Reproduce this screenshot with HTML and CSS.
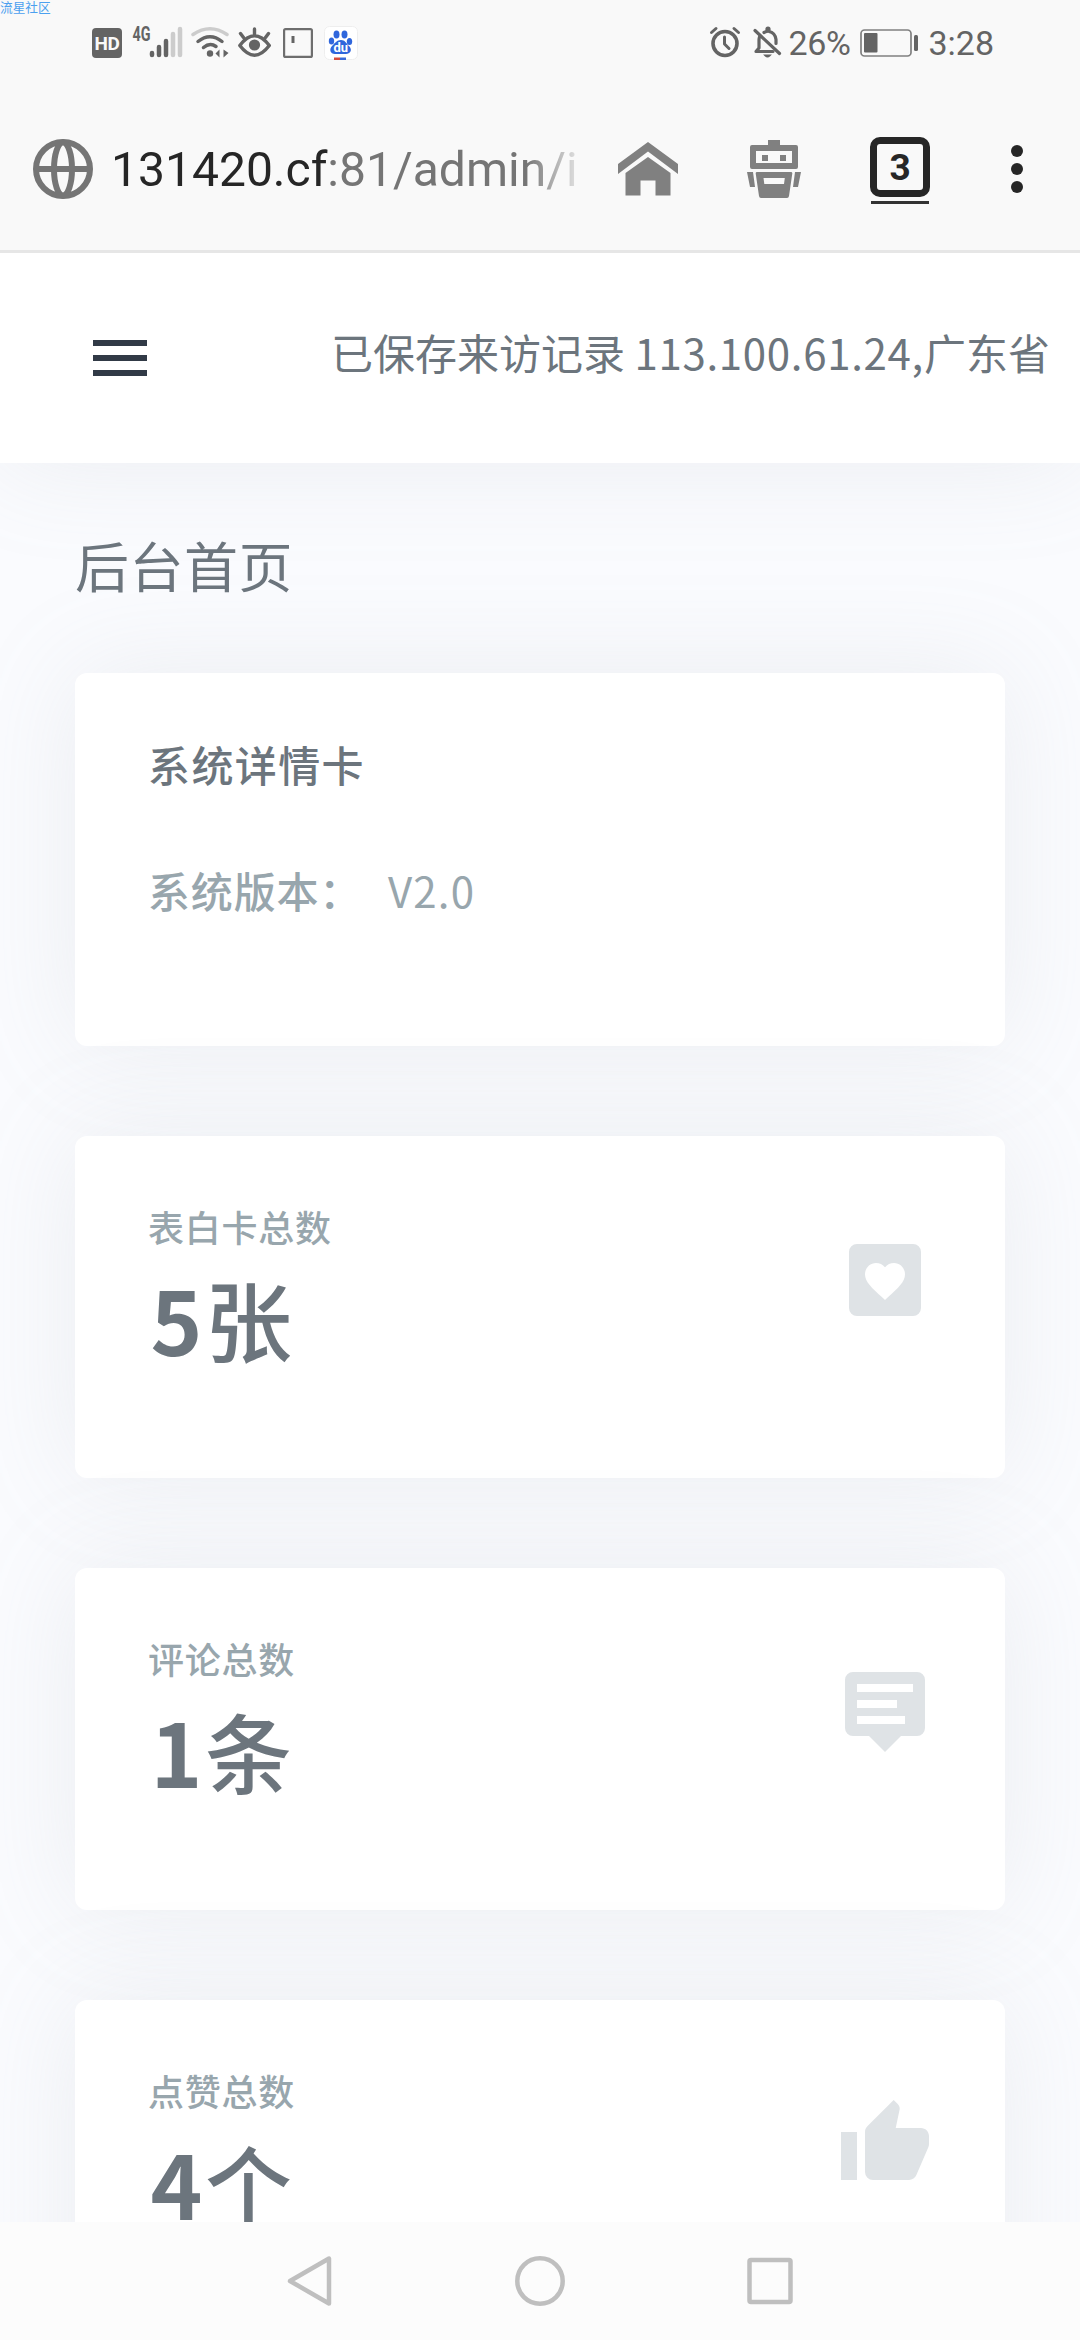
FILE: index.html
```html
<!DOCTYPE html>
<html lang="zh-CN">
<head>
<meta charset="utf-8">
<title>后台首页</title>
<link rel="stylesheet" href="styles.css">
</head>
<body>
<div class="screen">
  <header class="chrome">
    <span class="watermark">流星社区</span>
    <div class="status">
      <div class="status-group">
        <span class="hd">HD</span>
        <svg class="signal" width="52" height="38" viewBox="132 23 52 38"><text class="g4" x="132.500" y="41" textLength="18" lengthAdjust="spacingAndGlyphs">4G</text><path d="M152 53v2M159 47v8M166 41v14" stroke="#646464" stroke-width="4.500" stroke-linecap="round"/><path d="M173 34v21M180 29v26" stroke="#ccc" stroke-width="4.500" stroke-linecap="round"/></svg>
        <svg class="wifi" width="38" height="34" viewBox="191 25 38 34" fill="none" stroke-width="3.500" stroke-linecap="round"><path d="M193 34.500Q210 23 227 34.500" stroke="#ccc"/><path d="M198 41.500Q210 32 222 41.500M203.500 47.500Q210 42 216 46.500" stroke="#646464"/><circle cx="210" cy="53.500" r="3.200" fill="#646464"/><path d="M215.500 53.500l4-4v8zM228.500 53l-5-3.500v8z" fill="#646464"/></svg>
        <svg class="eye" width="34" height="34" viewBox="238 25 34 34" fill="none" stroke="#646464" stroke-width="3.400" stroke-linecap="round" stroke-linejoin="round"><path d="M239.800 45.500Q254.500 26 269.300 45.500Q254.500 65 239.800 45.500zM254.500 35v-6M243.500 37.500l-3-4M265.500 37.500l3-4"/><circle cx="254.500" cy="45" r="5.600" fill="#646464" stroke="none"/></svg>
        <svg class="note" width="30" height="30" viewBox="0 0 30 30"><rect x="1.100" y="1.100" width="27.800" height="27.800" rx="1.500" fill="none" stroke="#6e6e6e" stroke-width="2.200"/><path d="M8.500 8h3v7h-3z" fill="#646464"/></svg>
        <svg class="baidu" width="34" height="34" viewBox="0 0 34 34"><rect x=".5" y=".5" width="33" height="33" rx="5" fill="#fff" stroke="#eee"/><g fill="#2f66dc"><ellipse cx="12.500" cy="8.500" rx="3" ry="4"/><ellipse cx="20.500" cy="8.500" rx="3" ry="4"/><ellipse cx="7.500" cy="15" rx="2.700" ry="3.500"/><ellipse cx="25.500" cy="15.500" rx="2.700" ry="3.500"/><path d="M17 14c4 0 5 3 8 6 4 4 1 8-3 8H11c-5 0-6-5-3-8 3-3 5-6 9-6z"/></g><path d="M10 31.500h6v2.500h-6z" fill="#d54a3a"/><path d="M16 31.500h6v2.500h-6z" fill="#3768d8"/><text class="du" x="9.500" y="26">du</text></svg>
      </div>
      <div class="status-group">
        <svg class="alarm" width="32" height="34" viewBox="709 25 32 34" fill="none" stroke="#646464" stroke-linecap="round" stroke-linejoin="round"><circle cx="725" cy="43.500" r="12" stroke-width="3.600"/><path d="M724.500 37v7l4.500 4.500" stroke-width="3"/><path d="M711.500 32.500l4.500-4M738.500 32.500l-4.500-4" stroke-width="3"/></svg>
        <svg class="bell" width="30" height="34" viewBox="752 25 30 34" fill="none" stroke="#646464" stroke-width="3.200" stroke-linecap="round"><path d="M755 30.500l24.500 23"/><path d="M773 51.500H756l3-3.500V40q0-1.500.5-3M764 32.500q2-1 3-1V29q0-1 1-1t1 1v2.500q6 1 7 8v4" stroke-linejoin="round"/><path d="M765.500 55.500h4q-2 2-4 0z" stroke-width="2"/></svg>
        <span class="percent">26%</span>
        <svg class="battery" width="59" height="28" viewBox="0 0 59 28"><rect x="1" y="1" width="50" height="26" rx="3.500" fill="none" stroke="#808080" stroke-width="1.700"/><rect x="4" y="4" width="13.500" height="19.500" rx="1" fill="#646464"/><rect x="54" y="6" width="4" height="16" rx="1.500" fill="#646464"/></svg>
        <span class="clock">3:28</span>
      </div>
    </div>
    <div class="urlbar">
      <svg class="globe" width="60" height="60" viewBox="0 0 60 60" fill="none" stroke="#757575" stroke-width="6"><circle cx="30" cy="30" r="27"/><path d="M3 30h54"/><ellipse cx="30" cy="30" rx="9" ry="26.500"/></svg>
      <div class="url"><span class="host">131420.cf</span>:81/admin/i</div>
      <svg class="home" width="60" height="54" viewBox="0 0 60 54" fill="#808080"><path d="M30 0L60 22V32L30 9.500 0 32V22zM30 15L52.500 31V53.500H37.500V38.500H22.500V53.500H7.500V31z"/></svg>
      <svg class="robot" width="54" height="58" viewBox="0 0 54 58" fill="#808080" fill-rule="evenodd"><path d="M21 0H33V5H49q2 0 2 2V27q0 2-2 2H5q-2 0-2-2V7q0-2 2-2H21zM9 11V23H45V11zM15 15h6v6h-6zM33 15h6v6h-6zM10 32H44q1.500 0 1.300 1.500L42 56q-.3 2-2 2H14q-1.700 0-2-2L8.700 33.500Q8.500 32 10 32zM16.500 38l.8 6H37l.8-6zM0 32h6l2 15H3zM54 32h-6l-2 15h5z"/></svg>
      <div class="tabs"><span class="tabcount">3</span></div>
      <svg class="more" width="12" height="48" viewBox="0 0 12 48" fill="#262626"><circle cx="6" cy="6" r="6"/><circle cx="6" cy="24" r="6"/><circle cx="6" cy="42" r="6"/></svg>
    </div>
  </header>
  <main class="page">
    <div class="topbar">
      <span class="menu"><i></i><i></i><i></i></span>
      <p class="notice">已保存来访记录 <span class="ip">113.100.61.24,</span>广东省</p>
    </div>
    <h1 class="title">后台首页</h1>
    <section class="card detail">
      <h2 class="detail-title">系统详情卡</h2>
      <p class="version"><b>系统版本：</b><span>V2.0</span></p>
    </section>
    <section class="card stat">
      <div><h3 class="label">表白卡总数</h3><p class="value"><b>5</b>张</p></div>
      <svg class="stat-icon" viewBox="0 0 24 24"><path fill-rule="evenodd" d="M5 3H19A2 2 0 0 1 21 5V19A2 2 0 0 1 19 21H5A2 2 0 0 1 3 19V5A2 2 0 0 1 5 3zM12 17L12.720 16.340C15.300 14 17 12.460 17 10.570C17 9.030 15.790 7.750 14.250 7.750C13.380 7.750 12.550 8.150 12 8.800C11.450 8.150 10.620 7.750 9.750 7.750C8.210 7.750 7 9.030 7 10.570C7 12.460 8.700 14 11.280 16.340z"/></svg>
    </section>
    <section class="card stat">
      <div><h3 class="label">评论总数</h3><p class="value"><b>1</b>条</p></div>
      <svg class="stat-icon" viewBox="0 0 24 24"><path fill-rule="evenodd" d="M4 2H20A2 2 0 0 1 22 4V16A2 2 0 0 1 20 18H16L12 22 8 18H4A2 2 0 0 1 2 16V4A2 2 0 0 1 4 2zM5 5V7H19V5zM5 9V11H15V9zM5 13V15H17V13z"/></svg>
    </section>
    <section class="card stat">
      <div><h3 class="label">点赞总数</h3><p class="value"><b>4</b>个</p></div>
      <svg class="stat-icon" viewBox="0 0 24 24"><path d="M23 10C23 8.890 22.100 8 21 8H14.680L15.640 3.430C15.660 3.330 15.670 3.220 15.670 3.110C15.670 2.700 15.500 2.320 15.230 2.050L14.170 1 7.590 7.580C7.220 7.950 7 8.450 7 9V19A2 2 0 0 0 9 21H18C18.830 21 19.540 20.500 19.840 19.780L22.860 12.730C22.950 12.500 23 12.260 23 12V10M1 21H5V9H1V21Z"/></svg>
    </section>
  </main>
  <nav class="navbar">
    <svg width="50" height="54" viewBox="0 0 50 54"><path d="M44 4.500V49.500L5 27z"/></svg>
    <svg width="54" height="54" viewBox="0 0 54 54"><circle cx="27" cy="27" r="22.700"/></svg>
    <svg width="50" height="54" viewBox="0 0 50 54"><rect x="4.500" y="6" width="41" height="42" rx="1.500"/></svg>
  </nav>
</div>
</body>
</html>
```
FILE: styles.css
```css
* { box-sizing: border-box; margin: 0; padding: 0; }
body { font-family: "Noto Sans CJK SC", sans-serif; color: #6c757d; }
svg { display: block; flex: none; }
.screen { width: 1080px; height: 2340px; display: flex; flex-direction: column; overflow: hidden; }

.chrome { position: relative; height: 253px; flex: none; background: #f9f9f9; border-bottom: 3px solid #e6e6e6; font-family: Roboto, sans-serif; }
.watermark { position: absolute; left: 0; top: 0; font: 12.700px/13px "Noto Sans CJK SC", sans-serif; color: #4ba0ef; }
.status { height: 86px; padding: 0 86px 0 92px; display: flex; justify-content: space-between; align-items: center; color: #646464; }
.status-group { display: flex; align-items: center; }
.hd { width: 30px; height: 30px; border-radius: 4px; background: #646464; color: #f9f9f9; font: bold 19px/31px Roboto, sans-serif; text-align: center; letter-spacing: -.5px; }
.g4 { font: bold 20px Roboto, sans-serif; fill: #646464; }
.signal { margin-left: 10px; margin-bottom: 2px; }
.wifi { margin-left: 7px; margin-bottom: 2px; }
.eye { margin-left: 9px; margin-bottom: 2px; }
.note { margin-left: 11px; }
.baidu { margin-left: 11px; }
.du { font: bold 13px Roboto, sans-serif; fill: #fff; }
.bell { margin-left: 11px; margin-bottom: 2px; }
.alarm { margin-bottom: 2px; }
.percent { font-size: 34px; width: 63px; margin-left: 6px; letter-spacing: -.3px; }
.battery { margin-left: 9px; }
.clock { font-size: 34px; margin-left: 9px; }

.urlbar { height: 164px; padding: 2px 0 0 33px; display: flex; align-items: center; }
.url { width: 464px; padding-top: 2px; margin-left: 18px; overflow: hidden; white-space: nowrap; font-size: 48px; line-height: 64px; color: #757575; mask-image: linear-gradient(90deg, #000 415px, transparent 478px); }
.host { color: #262626; }
.home { margin-left: 43px; }
.robot { margin-left: 69px; }
.tabs { height: 67px; margin: 3px 0 0 70px; display: flex; border-bottom: 3px solid #333; width: 58px; justify-content: center; }
.tabcount { width: 60px; height: 60px; flex: none; border: 7px solid #262626; border-radius: 10px; color: #262626; font: bold 37px/48px Roboto, sans-serif; text-align: center; }
.more { margin-left: 82px; }

.page { flex: 1; min-height: 0; overflow: hidden; background: #fafbfe; }
.topbar { height: 210px; padding: 0 30px 0 93px; display: flex; align-items: center; justify-content: space-between; background: #fff; box-shadow: 0 0 105px rgba(154, 161, 171, .15); }
.menu { display: flex; flex-direction: column; gap: 9px; }
.menu i { width: 54px; height: 6px; background: #313a46; }
.notice { font-size: 42px; line-height: 60px; white-space: nowrap; padding-bottom: 13px; }
.ip { letter-spacing: .7px; }
.title { height: 210px; padding-left: 75px; font-size: 54px; font-weight: 400; letter-spacing: .5px; line-height: 203px; }
.card { margin: 0 75px 90px; background: #fff; border-radius: 12px; box-shadow: 0 0 105px rgba(154, 161, 171, .15); }
.detail { height: 373px; padding: 59px 73px; }
.detail-title { font-size: 42px; font-weight: 500; letter-spacing: 1.400px; line-height: 63px; }
.version { margin-top: 63px; font-size: 42px; line-height: 63px; color: #98a6ad; display: flex; letter-spacing: 1.200px; }
.version b { font-weight: 500; letter-spacing: .02em; width: 240px; }
.stat { height: 342px; padding: 70px 72px 0 73px; display: flex; justify-content: space-between; }
.stat-icon { width: 96px; height: 96px; margin: 26px 0 0; fill: #dfe3e6; }
.label { font-size: 36px; font-weight: 500; letter-spacing: .02em; line-height: 40px; color: #98a6ad; }
.value { font-size: 87px; font-weight: 500; line-height: 100px; margin-top: 22px; }
.value b { font-weight: 700; font-size: 88px; display: inline-block; width: 57px; text-align: center; }

.navbar { height: 118px; flex: none; background: #fcfcfc; display: flex; justify-content: center; align-items: center; gap: 178px; }
.navbar svg { fill: none; stroke: #bfbfbf; stroke-width: 4.500; stroke-linejoin: round; }
```
